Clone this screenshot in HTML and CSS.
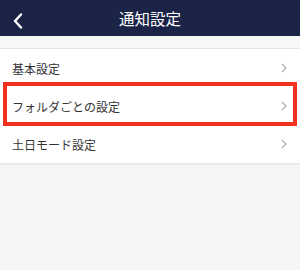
FILE: index.html
```html
<!DOCTYPE html>
<html lang="ja">
<head>
    <meta charset="UTF-8">
    <meta name="viewport" content="width=device-width, initial-scale=1.0">
    <title>通知設定</title>
    <link rel="stylesheet" href="styles.css">
</head>
<body>
    <!-- ヘッダー -->
    <div class="header">
        <span class="back">
            <svg width="10" height="16" viewBox="0 0 10 16"><path d="M8 1.5 L2 8 L8 14.5" fill="none" stroke="#fff" stroke-width="2.4" stroke-linecap="round" stroke-linejoin="round"/></svg>
        </span>
        <h1>通知設定</h1>
    </div>

    <div class="spacer"></div>

    <!-- 設定リスト -->
    <div class="menu">
        <div class="menu-item">
            <span>基本設定</span>
            <svg class="arrow" width="6" height="10" viewBox="0 0 6 10"><path d="M0.8 0.8 L5 5 L0.8 9.2" fill="none" stroke="#aaa" stroke-width="1.2"/></svg>
        </div>
        <div class="menu-item">
            <span>フォルダごとの設定</span>
            <svg class="arrow" width="6" height="10" viewBox="0 0 6 10"><path d="M0.8 0.8 L5 5 L0.8 9.2" fill="none" stroke="#aaa" stroke-width="1.2"/></svg>
            <!-- 赤枠 -->
            <div class="highlight"></div>
        </div>
        <div class="menu-item">
            <span>土日モード設定</span>
            <svg class="arrow" width="6" height="10" viewBox="0 0 6 10"><path d="M0.8 0.8 L5 5 L0.8 9.2" fill="none" stroke="#aaa" stroke-width="1.2"/></svg>
        </div>
    </div>
</body>
</html>
```

FILE: styles.css
```css
/* 共通 */
body {
    margin: 0;
    font-family: "Noto Sans CJK JP", "Noto Sans", sans-serif;
    background-color: #f5f5f5;
    color: #333;
}

/* ヘッダー */
.header {
    height: 36px;
    background-color: #1b2447;
    display: flex;
    align-items: center;
    justify-content: center;
    position: relative;
}
.header h1 {
    margin: 0;
    font-size: 15.5px;
    font-weight: normal;
    color: #fff;
}
.back {
    position: absolute;
    left: 13px;
    top: 10px;
}

.spacer {
    height: 12px;
    border-bottom: 1px solid #e4e4e4;
    background-color: #f7f7f7;
}

/* リスト */
.menu {
    background-color: #fff;
    border-bottom: 2px solid #ececec;
}
.menu-item {
    position: relative;
    height: 38px;
    display: flex;
    align-items: center;
    justify-content: space-between;
    padding: 0 13px 0 12px;
    font-size: 12px;
}
.highlight {
    position: absolute;
    top: -5px;
    left: 3px;
    right: 3px;
    bottom: -1px;
    border: 4px solid #f0321e;
}
```
